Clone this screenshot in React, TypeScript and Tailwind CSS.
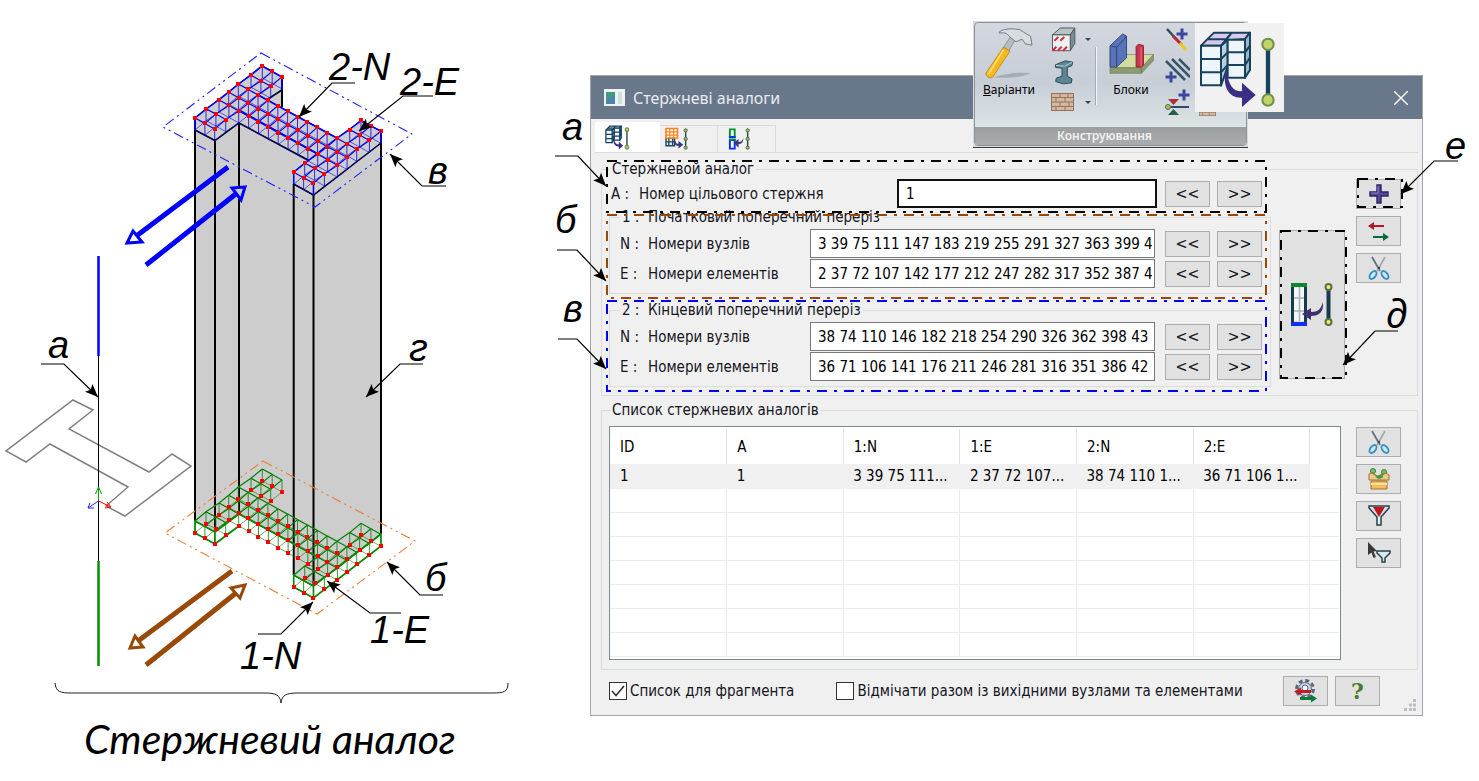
import React from "react";

type Pt = [number, number];

const U: Pt[] = [
  [0, 0],
  [11, -9.3],
  [24, -18],
  [33.7, -25.7],
  [43.3, -34],
  [56, -42.7],
  [67.3, -52],
];

// The section is an I shape: flanges at i = 0..2 and 10..12, web at j = 2..4
const hasNode = (i: number, j: number) =>
  i >= 0 && i <= 12 && j >= 0 && j <= 6 && (i <= 2 || i >= 10 || (j >= 2 && j <= 4));

const node = (i: number, j: number, y: number): Pt => [
  195 + U[j][0] + i * 9.87,
  y + U[j][1] + i * 5.43,
];

function planePath(y: number) {
  let d = "";
  for (let i = 0; i <= 12; i++) {
    for (let j = 0; j <= 6; j++) {
      if (!hasNode(i, j)) continue;
      const a = node(i, j, y);
      const next: Pt[] = [];
      if (hasNode(i + 1, j)) next.push(node(i + 1, j, y));
      if (hasNode(i, j + 1)) next.push(node(i, j + 1, y));
      next.forEach((b) => {
        d += `M${a[0].toFixed(1)} ${a[1].toFixed(1)}L${b[0].toFixed(1)} ${b[1].toFixed(1)}`;
      });
    }
  }
  return d;
}

function nodes(y: number) {
  const list: Pt[] = [];
  for (let i = 0; i <= 12; i++) {
    for (let j = 0; j <= 6; j++) {
      if (hasNode(i, j)) list.push(node(i, j, y));
    }
  }
  return list;
}

function Mesh({ top, color }: { top: number; color: string }) {
  const posts = nodes(top)
    .map(([x, y]) => `M${x.toFixed(1)} ${y.toFixed(1)}v12`)
    .join("");
  return (
    <g fill="none" stroke={color}>
      <path d={planePath(top)} strokeWidth="1.2" />
      <path d={planePath(top + 12)} strokeWidth="0.6" />
      <path d={posts} strokeWidth="0.8" />
    </g>
  );
}

function Dots({ y: plane }: { y: number }) {
  return (
    <g fill="#ff0000">
      {nodes(plane).map(([x, y], n) => (
        <rect key={n} x={Math.round(x) - 2} y={Math.round(y) - 2} width="4" height="4" />
      ))}
    </g>
  );
}

function Callout({ points, label, x, y }: { points: string; label: string; x: number; y: number }) {
  return (
    <g>
      <polyline points={points} fill="none" stroke="#000" strokeWidth="1.2" markerEnd="url(#tip)" />
      <text x={x} y={y} fontSize="38" fontStyle="italic">
        {label}
      </text>
    </g>
  );
}

function ColumnFigure() {
  return (
    <svg
      width="590"
      height="708"
      viewBox="0 0 590 708"
      className="block overflow-visible font-['Liberation_Sans',Arial,sans-serif]"
    >
      <defs>
        <marker id="tip" viewBox="0 0 12 10" refX="12" refY="5" markerWidth="13" markerHeight="11" markerUnits="userSpaceOnUse" orient="auto">
          <path d="M0 0L12 5L0 10L2.500 5z" fill="#000" />
        </marker>
      </defs>

      {/* Column body */}
      <path
        d="M195 118L262 66L282 77V108L337 138L361 121L381 132V534L313.5 586L293.7 575V544L239 514L215 532L195 521z"
        fill="#cdcdcd"
      />
      <g fill="none" stroke="#000" strokeWidth="2">
        <path d="M195 119V521M215 139V532M239 123V514M293.7 184V575M313.5 195V586M381 132V534M282 78V107" />
        <path d="M195 130L215 140.5L239 123L308 160M293.7 184L313.5 195L381 143M268 99L282 90" strokeWidth="1.5" />
      </g>

      <Mesh top={118} color="#0000f0" />
      <path
        d="M195 130V118L262 66L282 77V90M293.7 184V172L337 138M337 138L361 121L381 131V143M258 95L337 138M239 110L318 154M313.5 195V183"
        fill="none"
        stroke="#0000f0"
        strokeWidth="1.5"
      />
      <Dots y={118} />
      <Mesh top={521} color="#008000" />
      <path
        d="M195 533V521L215 532V544zM195 533L215 544L239 526M215 532L239 514L318 557M293.7 575V587L313.5 598L381 546V534L313.5 586zM313.5 586V598"
        fill="none"
        stroke="#008c00"
        strokeWidth="1.6"
      />
      <Dots y={533} />

      {/* Section planes */}
      <g fill="none" strokeWidth="1.1" strokeDasharray="10 4 2 4 2 4">
        <path d="M261 53L412 134L315 207L163 127z" stroke="#2020ff" />
        <path d="M263 461L415 541L317 614L165 533z" stroke="#ed7d31" />
      </g>

      {/* Direction arrows */}
      <g stroke="#0000ff" strokeWidth="5" fill="none">
        <path d="M228 167L135 237M146 265L237 193" />
        <g strokeWidth="3">
          <path d="M127 243L133 231L142 242z" fill="#fff" />
          <path d="M245 187L232 188L241 200z" fill="#cdcdcd" />
        </g>
      </g>
      <g stroke="#984807" strokeWidth="5" fill="none">
        <path d="M232 571L138 641M146 665L236 593" />
        <g strokeWidth="3" fill="#fff">
          <path d="M130 648L135 636L143 647z" />
          <path d="M245 585L231 588L240 598z" />
        </g>
      </g>

      {/* Bar and its cross-section */}
      <path
        d="M73 400L93 410L69 429L149 472L172 454L191 466L125 516L106 506L128 487L50 444L26 462L6 451z"
        fill="none"
        stroke="#808080"
        strokeWidth="1.5"
      />
      <path d="M98.5 356V561" stroke="#000" />
      <path d="M98.5 256V356" stroke="#0000ff" strokeWidth="2.5" />
      <path d="M98.5 561V666" stroke="#009000" strokeWidth="2.5" />
      <g fill="none">
        <path d="M98.5 501V488M95.500 494L98.500 487L101.500 494" stroke="#00a000" />
        <path d="M98.500 501L111 507M107 502L111 507L105 508" stroke="#ff0000" />
        <path d="M98.500 501L88 508M90 503L88 508L94 508" stroke="#2020ff" />
      </g>

      <Callout points="41,364 64,364 98,397" label="а" x={48} y={358} />
      <Callout points="355,83 332,83 299,117" label="2-N" x={329} y={80} />
      <Callout points="433,96 403,96 359,131" label="2-E" x={400} y={95} />
      <Callout points="446,186 422,186 390,154" label="в" x={428} y={184} />
      <Callout points="423,364 400,364 366,397" label="г" x={409} y={361} />
      <Callout points="443,595 420,595 387,562" label="б" x={425} y={591} />
      <Callout points="401,613 370,613 327,581" label="1-E" x={370} y={643} />
      <Callout points="258,634 281,634 313,602" label="1-N" x={240} y={669} />

      <path d="M55 683C56 692 60 693 72 693H265C276 693 280 695 281 703C282 695 286 693 298 693H492C504 693 508 692 508 683" fill="none" stroke="#222" />
    </svg>
  );
}

function Annotations() {
  return (
    <svg
      width="1479"
      height="781"
      viewBox="0 0 1479 781"
      className="pointer-events-none absolute left-0 top-0 font-['Liberation_Sans',Arial,sans-serif]"
    >
      <g fill="none" strokeWidth="2" strokeDasharray="10 7 3 7">
        <rect x="607" y="161" width="659" height="51" stroke="#000" />
        <rect x="607" y="215" width="659" height="83" stroke="#984807" />
        <rect x="607" y="301" width="659" height="90" stroke="#0000ff" />
        <rect x="1281" y="231" width="65" height="147" stroke="#000" />
        <rect x="1358" y="179" width="44" height="28" stroke="#000" />
      </g>
      <Callout points="555,156 578,156 606,186" label="а" x={562} y={140} />
      <Callout points="557,250 577,250 606,281" label="б" x={555} y={233} />
      <Callout points="558,339 577,339 606,369" label="в" x={563} y={322} />
      <g className="font-['Noto_Sans','Open_Sans',sans-serif]">
        <Callout points="1398,331 1375,331 1343,365" label="д" x={1386} y={328} />
      </g>
      <Callout points="1458,161 1434,161 1401,194" label="е" x={1445} y={159} />
    </svg>
  );
}

/* Icons */

function BarAnalogIcon({ className, line = 6 }: { className: string; line?: number }) {
  return (
    <svg viewBox="705 24 267 267" className={className}>
      <g stroke="#16425c" strokeWidth={line} strokeLinejoin="round">
        <path d="M783 92L803 72V155L783 212z" fill="#b8cfe0" />
        <path d="M723 92L762 53H870L855 72L803 76L783 92z" fill="#d9c9f0" />
        <path d="M855 72L870 53V165L855 188z" fill="#9bb6c8" />
        <path d="M803 74H855V188H803z" fill="#eef6fa" />
        <path d="M723 92H783V211H723z" fill="#eef6fa" />
        <path d="M723 132H783L803 112H855L870 92M723 172H783L803 150H855L870 128M742 73H800L815 53M783 92L815 53" fill="none" />
      </g>
      <path d="M796 168C788 215 806 250 846 248V276L887 240L846 203V229C820 230 806 210 800 170z" fill="#3a2f86" />
      <path d="M924 88V255" stroke="#16425c" strokeWidth="13" />
      <g fill="#c3d56a" stroke="#6f8f4a" strokeWidth={line}>
        <circle cx="924" cy="88" r="17" />
        <circle cx="924" cy="255" r="17" />
      </g>
    </svg>
  );
}

function Rod() {
  return (
    <g>
      <path d="M21.500 3V21" stroke="#1b4a5c" strokeWidth="1.5" />
      <g fill="#a9b86a" stroke="#4f6a3a">
        <circle cx="21.500" cy="3" r="1.7" />
        <circle cx="21.500" cy="12" r="1.7" />
        <circle cx="21.500" cy="21" r="1.7" />
      </g>
    </g>
  );
}

function TableTabIcon() {
  return (
    <svg viewBox="0 0 25 24" className="h-6 w-6">
      <path d="M1 11H10V19H1z" fill="#dce8ee" stroke="#1b4a5c" strokeWidth="1.4" />
      <path d="M1 15H11M4 11V19M8 11V19" stroke="#1b4a5c" strokeWidth="1.4" />
      <path d="M1 1H13V11H1z" fill="#fff" stroke="#ff7f1a" strokeWidth="1.6" />
      <path d="M1 4.500H13M1 8H13M5 1V11M9 1V11" stroke="#ff7f1a" strokeWidth="1.2" />
      <path d="M10 13C11 16 12 17 14 17V14L19 18L14 22V19C11 19 9 17 10 13z" fill="#3f3578" />
      <Rod />
    </svg>
  );
}

function SegmentTabIcon() {
  return (
    <svg viewBox="0 0 25 24" className="h-6 w-6">
      <path d="M3 2H8V10H3z" fill="#fff" stroke="#009030" strokeWidth="2" />
      <path d="M3 13H8V22H3z" fill="#fff" stroke="#0030ff" strokeWidth="2" />
      <path d="M2 10H9" stroke="#0030ff" strokeWidth="2" />
      <path d="M2 12.500H9" stroke="#009030" strokeWidth="2" />
      <path d="M17 11C17 16 15 17 12 17.500V21L7 16L12 12V15C15 15 16 14 17 11z" fill="#3f3578" />
      <Rod />
    </svg>
  );
}

function TransferIcon() {
  return (
    <svg viewBox="0 0 42 44" className="h-11 w-[42px]">
      <path d="M3 4H15V38H3z" fill="#f2f7fa" />
      <path d="M8.500 4V38M3 15H15M3 28H15" stroke="#a9b0b8" strokeWidth="1.5" />
      <path d="M1.500 4V39M14.500 4V39" stroke="#173a4c" strokeWidth="3" />
      <path d="M0 0H16V4H0z" fill="#0a8a2a" />
      <path d="M0 39H16V43H0z" fill="#1030f0" />
      <path d="M32 19C33 29 28 33 20 33V37L11 31L20 25V29C27 29 30 26 32 19z" fill="#3f2f70" />
      <path d="M37.500 5V39" stroke="#173a4c" strokeWidth="4" />
      <g fill="#e6ef70" stroke="#5f7040" strokeWidth="2">
        <circle cx="37.500" cy="4" r="3" />
        <circle cx="37.500" cy="39" r="3" />
      </g>
    </svg>
  );
}

function PlusIcon() {
  return (
    <svg viewBox="0 0 20 20" className="h-5 w-5">
      <path d="M8 1H12V8H19V12H12V19H8V12H1V8H8z" fill="#54489a" stroke="#2b2360" strokeWidth="1.4" />
      <path d="M9 2V9H2" fill="none" stroke="#8b83c8" />
    </svg>
  );
}

function SwapIcon() {
  return (
    <svg viewBox="0 0 22 20" className="h-5 w-[22px]">
      <path d="M16 5H6" stroke="#b01822" strokeWidth="2" />
      <path d="M0 5L6 1V9z" fill="#b01822" />
      <path d="M5 16H15" stroke="#0a6a3a" strokeWidth="2" />
      <path d="M21 16L15 12V20z" fill="#0a6a3a" />
    </svg>
  );
}

function ScissorsIcon() {
  return (
    <svg viewBox="0 0 22 24" className="h-6 w-[22px]">
      <path d="M4 1L12 15" stroke="#66707a" strokeWidth="1.8" />
      <path d="M17 1L9 15" stroke="#a2a9b0" strokeWidth="1.8" />
      <circle cx="11" cy="12" r="1.200" fill="#444" />
      <g fill="#cdeaf7" stroke="#3b8fc0" strokeWidth="1.9">
        <ellipse cx="5" cy="19" rx="2.700" ry="4.500" transform="rotate(38 5 19)" />
        <ellipse cx="17" cy="19" rx="2.700" ry="4.500" transform="rotate(-38 17 19)" />
      </g>
    </svg>
  );
}

function BoxIcon() {
  return (
    <svg viewBox="0 0 22 24" className="h-6 w-[22px]">
      <g fill="#7cc06a" stroke="#2f7a34">
        <circle cx="5" cy="4" r="2.500" />
        <circle cx="16" cy="5" r="2.500" />
        <path d="M4 6L9 10L17 7" fill="none" strokeWidth="2" />
      </g>
      <path d="M1 7L4 6L10 10L18 6L21 8V13H1z" fill="#eec98c" stroke="#a5702c" />
      <path d="M3 14H19V22H3z" fill="#f4bc5c" stroke="#a5702c" />
      <path d="M3 17H19" stroke="#fbe0a6" strokeWidth="2" />
      <path d="M8 9L11 11L15 9" fill="none" stroke="#3f9a44" strokeWidth="2" />
    </svg>
  );
}

function FunnelIcon() {
  return (
    <svg viewBox="0 0 22 22" className="h-[22px] w-[22px]">
      <path d="M1 1H21V3L13 12V20H9V12L1 3z" fill="#d5e4ea" stroke="#27404c" strokeWidth="1.5" />
      <path d="M5 2H17L11 12z" fill="#c4141e" />
      <path d="M11 12V19" stroke="#fff" />
    </svg>
  );
}

function PickFilterIcon() {
  return (
    <svg viewBox="0 0 24 22" className="h-[22px] w-6">
      <path d="M1 0L10 9L6.500 9.500L9 15L6.500 16L4.500 10.500L1 13z" fill="#3a3a3a" />
      <path d="M10 9H23V11L18 16V20H15V16L10 11z" fill="#d5e8ee" stroke="#27404c" strokeWidth="1.5" />
    </svg>
  );
}

function GearIcon() {
  return (
    <svg viewBox="0 0 24 24" className="h-6 w-6">
      <circle cx="11" cy="10" r="8.500" fill="none" stroke="#596880" strokeWidth="3" strokeDasharray="4 2.670" />
      <circle cx="11" cy="10" r="6.500" fill="#cdd5e2" stroke="#596880" />
      <circle cx="11" cy="9" r="3" fill="#f4f6fa" stroke="#596880" />
      <path d="M0 12.500L7 8.500V11H17V14H7V16.500z" fill="#c21c24" />
      <path d="M23 19.500L17 15.500V18H6V21H17V23.500z" fill="#0c7a38" />
    </svg>
  );
}

function HammerIcon() {
  return (
    <svg viewBox="85 38 144 158" className="h-[53px] w-12">
      <path d="M112 188C150 176 190 172 222 176C190 190 140 192 112 188z" fill="#8f959c" opacity="0.6" />
      <path d="M140 100L163 64L176 74L156 110z" fill="#b5bcc2" stroke="#6e767e" strokeWidth="2" />
      <path d="M128 52C145 40 175 42 190 46L222 66L226 92L206 88L196 74L178 82L158 66C150 54 140 54 128 56z" fill="#d8dde1" stroke="#737b83" strokeWidth="3" />
      <path d="M140 98L160 110L108 188C100 194 86 186 88 176z" fill="#f6b81a" stroke="#a5750a" strokeWidth="2" />
      <path d="M140 106L96 178" stroke="#ffe07a" strokeWidth="5" />
    </svg>
  );
}

function BlocksIcon() {
  return (
    <svg viewBox="447 53 136 124" className="h-[41px] w-[45px]">
      <path d="M450 158L498 118H582L545 158z" fill="#d4dca4" stroke="#7d8860" strokeWidth="2" />
      <path d="M450 158H545V175H450zM545 158L582 118V136L545 175z" fill="#8c9c70" stroke="#6c7a54" strokeWidth="2" />
      <path d="M450 92L488 56L500 62V128L470 156H450z" fill="#5873b8" stroke="#33487f" strokeWidth="3" />
      <path d="M470 96V154M452 92L470 96L500 64" stroke="#2c4078" strokeWidth="3" fill="none" />
      <path d="M529 94L536 87L551 91V150L545 156H529z" fill="#c93450" stroke="#8c1c34" strokeWidth="3" />
      <path d="M544 96V154" stroke="#ee7b90" strokeWidth="3" />
    </svg>
  );
}

function SolidIcon() {
  return (
    <svg viewBox="272 38 75 76" className="h-[25px] w-[25px]">
      <path d="M276 62L300 41H344L330 62z" fill="#b6c4c6" stroke="#4c5a5c" strokeWidth="3" />
      <path d="M330 62L344 41V88L330 110z" fill="#7b8c8e" stroke="#4c5a5c" strokeWidth="3" />
      <path d="M276 62H330V110H276z" fill="#eef2f2" stroke="#4c5a5c" strokeWidth="3" />
      <path d="M282 80L294 68M300 80L312 68M276 110L288 98M292 110L304 98M308 110L320 98" stroke="#d8243c" strokeWidth="6" />
    </svg>
  );
}

function BeamIcon() {
  return (
    <svg viewBox="278 136 60 74" className="h-[25px] w-5">
      <path d="M282 150L312 138L334 142L332 152L318 158V184L332 192L330 204L306 207L283 200L285 190L302 184V160L283 158z" fill="#5d8594" stroke="#2c4c5a" strokeWidth="3" />
      <path d="M284 152L310 154L332 143" stroke="#b4d0da" strokeWidth="3" fill="none" />
    </svg>
  );
}

function BrickIcon({ className = "h-[18px] w-[23px]" }: { className?: string }) {
  return (
    <svg viewBox="0 0 23 18" className={className} preserveAspectRatio="xMinYMin slice">
      <path d="M0 0H23V18H0z" fill="#d3b89f" />
      <path
        d="M0 4.500H23M0 9H23M0 13.500H23M9 0V4M17 0V4M5 5V9M14 5V9M9 9V13M18 9V13M5 14V18M14 14V18M0 0.500H23M0 17.500H23M0.500 0V18M22.500 0V18"
        stroke="#94735c"
        strokeWidth="1"
      />
    </svg>
  );
}

function SmallPlus({ x, y }: { x: number; y: number }) {
  return <path d={`M${x} ${y - 5.5}v11M${x - 5.5} ${y}h11`} stroke="#3a46a0" strokeWidth="3" />;
}

function AddBarIcon() {
  return (
    <svg viewBox="0 0 25 24" className="h-6 w-[25px]">
      <path d="M2 1L12 12" stroke="#2d4c62" strokeWidth="2.500" />
      <path d="M8 8L17 17" stroke="#b8283a" strokeWidth="3" />
      <path d="M15 15L21 22" stroke="#f2c81c" strokeWidth="3" />
      <SmallPlus x={17} y={6} />
    </svg>
  );
}

function AddHatchIcon() {
  return (
    <svg viewBox="0 0 25 25" className="h-[25px] w-[25px]">
      <path d="M1 3L20 22M7 1L25 19M14 1L25 12" stroke="#35566a" strokeWidth="2.500" />
      <SmallPlus x={6} y={19} />
    </svg>
  );
}

function AddSupportIcon() {
  return (
    <svg viewBox="0 0 25 27" className="h-[27px] w-[25px]">
      <path d="M3 18H24" stroke="#2d4c62" strokeWidth="2" />
      <circle cx="3" cy="18" r="2.500" fill="#a7ba72" stroke="#55703c" />
      <path d="M3 10H14L8.500 16z" fill="#a8323c" />
      <path d="M3 26H14L8.500 20z" fill="#20604c" />
      <SmallPlus x={19} y={6} />
    </svg>
  );
}

/* Ribbon strip */

function Caret() {
  return <span className="border-x-[3px] border-t-[3px] border-x-transparent border-t-[#444]" />;
}

function Ribbon() {
  return (
    <div className="absolute -top-[54px] left-[383px] h-[127px] w-[275px] border-b border-[#3c3c3c] bg-[#d8dcdf] p-px font-['Noto_Sans','Open_Sans',sans-serif] text-[12px]">
      <div className="flex h-[124px] flex-col overflow-hidden rounded border border-[#8d9399] bg-linear-to-b from-[#d3d7de] via-[#c8ced6] to-[#e6eeee]">
        <div className="flex h-[106px] pl-1">
          <button className="flex h-20 w-[60px] flex-col items-center pt-1 leading-4">
            <HammerIcon />
            <span className="mt-[2px]">
              <u>В</u>аріанти
            </span>
          </button>
          <div className="ml-3 flex w-10 flex-col gap-2 pt-1">
            <button className="flex items-center justify-between" aria-label="Об’ємні елементи">
              <SolidIcon />
              <Caret />
            </button>
            <button className="flex pl-[3px]" aria-label="Профіль">
              <BeamIcon />
            </button>
            <button className="flex items-center justify-between" aria-label="Кладка">
              <BrickIcon />
              <Caret />
            </button>
          </div>
          <div className="ml-1 mt-6 h-[58px] w-[2px] border-l border-[#a5abb2] bg-[#f4f6f8]" />
          <button className="ml-[6px] flex h-20 w-14 flex-col items-center pt-[10px] leading-4">
            <BlocksIcon />
            <span className="mt-2">Блоки</span>
          </button>
          <div className="ml-[6px] flex w-[26px] flex-col gap-[6px] pt-[5px]">
            <AddBarIcon />
            <AddHatchIcon />
            <AddSupportIcon />
          </div>
          <div className="ml-2 mt-[86px]">
            <BrickIcon className="h-[7px] w-[17px]" />
          </div>
        </div>
        <div className="h-[18px] bg-linear-to-b from-[#9b9fa0] to-[#a9adad] pr-3 text-center font-semibold leading-[18px] text-[#f1f1f1]">
          Конструювання
        </div>
      </div>
      <div className="absolute left-[222px] top-[2px] h-[89px] w-[89px] bg-[#f1f1f1]">
        <BarAnalogIcon className="h-[89px] w-[89px]" />
      </div>
    </div>
  );
}

/* Dialog controls */

const buttonClass = "flex items-center justify-center border border-[#adadad] bg-[#e1e1e1]";

function IconButton({ label, children }: { label: string; children: React.ReactNode }) {
  return (
    <button aria-label={label} className={`${buttonClass} h-[30px] w-[45px]`}>
      {children}
    </button>
  );
}

function StepButtons() {
  return (
    <div className="flex gap-[7px] text-[16px]">
      <button className={`${buttonClass} h-[26px] w-[45px]`}>&lt;&lt;</button>
      <button className={`${buttonClass} h-[26px] w-[45px]`}>&gt;&gt;</button>
    </div>
  );
}

function FieldRow({ id, mark, label, value }: { id: string; mark: string; label: string; value: string }) {
  return (
    <div className="flex h-[29px] items-center">
      <label htmlFor={id} className="flex flex-1 whitespace-nowrap">
        <span className="w-7">{mark} :</span>
        {label}
      </label>
      <input
        id={id}
        defaultValue={value}
        className="mr-[10px] h-[29px] w-[345px] border border-[#7a7a7a] bg-white pl-[7px] pr-[2px] text-black"
      />
      <StepButtons />
    </div>
  );
}

const sections = [
  {
    key: "start",
    title: "1 :  Початковий поперечний переріз",
    nodes: "3 39 75 111 147 183 219 255 291 327 363 399 435",
    elements: "2 37 72 107 142 177 212 247 282 317 352 387 422",
  },
  {
    key: "end",
    title: "2 :  Кінцевий поперечний переріз",
    nodes: "38 74 110 146 182 218 254 290 326 362 398 43",
    elements: "36 71 106 141 176 211 246 281 316 351 386 42",
  },
];

const columns = ["ID", "A", "1:N", "1:E", "2:N", "2:E"];
const firstRow = ["1", "1", "3 39 75 111...", "2 37 72 107...", "38 74 110 1...", "36 71 106 1..."];

function AnalogTable() {
  return (
    <div className="h-[234px] flex-1 border border-[#828790] bg-white pr-px pt-[2px]">
      <table className="w-full table-fixed border-collapse text-left text-black">
        <thead>
          <tr className="h-[35px]">
            {columns.map((c) => (
              <th key={c} className="w-[16%] border-r border-[#e2e2e2] pl-[10px] font-normal">
                {c}
              </th>
            ))}
            <th />
          </tr>
        </thead>
        <tbody>
          <tr className="h-6 bg-[#f0f0f0]">
            {firstRow.map((c, i) => (
              <td key={i} className="whitespace-nowrap border-b border-[#f0f0f0] pl-[10px] leading-5">
                {c}
              </td>
            ))}
            <td className="border-b border-[#f0f0f0] bg-white" />
          </tr>
          {[1, 2, 3, 4, 5, 6, 7].map((r) => (
            <tr key={r} className="h-6">
              {columns.map((c) => (
                <td key={c} className="border-b border-r border-[#ececec]" />
              ))}
              <td className="border-b border-[#ececec]" />
            </tr>
          ))}
        </tbody>
      </table>
    </div>
  );
}

function Dialog() {
  return (
    <div className="border border-[#a2a6ab] bg-[#f0f0f0] font-['DejaVu_Sans_Condensed','DejaVu_Sans',sans-serif] text-[15px] leading-[18px] text-[#15151f]">
      <header className="flex h-[43px] items-center bg-[#68778a] pl-[13px] pr-[14px] font-['Noto_Sans','Open_Sans',sans-serif] text-[16px] text-[#e8ebef]">
        <svg viewBox="0 0 21 17" className="mr-2 h-[17px] w-[21px]">
          <path d="M0 0H21V17H0z" fill="#eef2f2" />
          <path d="M2 3H11V15H2z" fill="#3f9a80" />
          <path d="M2 10L11 6V15H2z" fill="#4b86a8" />
          <path d="M14 3H18V15H14z" fill="#cfe0d8" />
        </svg>
        <h1 className="flex-1">Стержневі аналоги</h1>
        <button aria-label="Закрити">
          <svg viewBox="0 0 14 14" className="h-[14px] w-[14px]">
            <path d="M0 0L14 14M14 0L0 14" stroke="#fff" strokeWidth="1.4" />
          </svg>
        </button>
      </header>

      <div role="tablist" className="mx-1 mt-1 flex h-[30px] items-end border-b border-[#dadada]">
        <button role="tab" aria-selected="true" aria-label="Стержневий аналог" className="flex h-[30px] w-[65px] items-center bg-white pl-[9px]">
          <BarAnalogIcon className="h-7 w-7" line={12} />
        </button>
        <button role="tab" aria-selected="false" aria-label="Таблиця" className="flex h-[27px] w-[58px] items-center border-r border-t border-[#dadada] pl-[5px]">
          <TableTabIcon />
        </button>
        <button role="tab" aria-selected="false" aria-label="Сегменти" className="flex h-[27px] w-[58px] items-center border-r border-t border-[#dadada] pl-[9px]">
          <SegmentTabIcon />
        </button>
      </div>

      <div className="pl-[10px] pr-1">
        <fieldset className="mt-[6px] border border-[#dcdcdc] pb-2 pl-[7px] pr-4">
          <legend className="ml-px h-5 px-[2px] leading-5">Стержневой аналог</legend>
          <div className="flex">
            <div className="min-w-0 flex-1">
              <div className="flex h-[29px] items-center pl-[2px] pr-[9px]">
                <label htmlFor="target" className="flex flex-1 whitespace-nowrap">
                  <span className="w-7">A :</span>
                  Номер цільового стержня
                </label>
                <input
                  id="target"
                  defaultValue="1"
                  className="mr-2 h-[29px] w-[260px] border-2 border-[#111] bg-white px-[7px] text-black"
                />
                <StepButtons />
              </div>
              {sections.map((s) => (
                <fieldset key={s.key} className="mb-[7px] border border-[#dcdcdc] pb-[5px] pl-[10px] pr-2 pt-[3px] last:mb-0">
                  <legend className="h-[18px] whitespace-pre px-[2px]">{s.title}</legend>
                  <div className="flex flex-col gap-px">
                    <FieldRow id={`${s.key}-nodes`} mark="N" label="Номери вузлів" value={s.nodes} />
                    <FieldRow id={`${s.key}-elements`} mark="E" label="Номери елементів" value={s.elements} />
                  </div>
                </fieldset>
              ))}
            </div>
            <button aria-label="Перенести" className={`${buttonClass} ml-2 mt-[51px] h-[149px] w-[66px]`}>
              <TransferIcon />
            </button>
            <div className="ml-[11px] flex flex-col gap-[7px]">
              <IconButton label="Додати">
                <PlusIcon />
              </IconButton>
              <IconButton label="Поміняти">
                <SwapIcon />
              </IconButton>
              <IconButton label="Вирізати">
                <ScissorsIcon />
              </IconButton>
            </div>
          </div>
        </fieldset>

        <fieldset className="mt-1 border border-[#dcdcdc] pb-[9px] pl-[7px] pr-4 pt-[6px]">
          <legend className="ml-px h-5 px-[2px] leading-5">Список стержневих аналогів</legend>
          <div className="flex">
            <AnalogTable />
            <div className="ml-[15px] flex flex-col gap-[7px] pt-px">
              <IconButton label="Видалити зі списку">
                <ScissorsIcon />
              </IconButton>
              <IconButton label="Упакувати">
                <BoxIcon />
              </IconButton>
              <IconButton label="Фільтр">
                <FunnelIcon />
              </IconButton>
              <IconButton label="Вибрати за фільтром">
                <PickFilterIcon />
              </IconButton>
            </div>
          </div>
        </fieldset>

        <footer className="flex items-center pb-[9px] pl-2 pr-[38px] pt-[6px]">
          <CheckOption label="Список для фрагмента" checked />
          <div className="w-[42px]" />
          <CheckOption label="Відмічати разом із вихідними вузлами та елементами" />
          <div className="ml-auto flex gap-[7px]">
            <IconButton label="Налаштування">
              <GearIcon />
            </IconButton>
            <IconButton label="Довідка">
              <span className="font-['DejaVu_Serif',serif] text-[22px] font-bold text-[#4a7a2c]">?</span>
            </IconButton>
          </div>
        </footer>
      </div>
    </div>
  );
}

function CheckOption({ label, checked = false }: { label: string; checked?: boolean }) {
  return (
    <label className="flex items-center gap-[3px] whitespace-nowrap">
      <span className="relative flex h-[18px] w-[18px]">
        <input
          type="checkbox"
          defaultChecked={checked}
          className="peer h-[18px] w-[18px] appearance-none border border-[#333] bg-white"
        />
        <svg viewBox="0 0 18 18" className="pointer-events-none absolute inset-0 hidden peer-checked:block">
          <path d="M3 9L7 13.500L15 4" fill="none" stroke="#333" strokeWidth="1.6" />
        </svg>
      </span>
      {label}
    </label>
  );
}

function Grip() {
  return (
    <svg viewBox="0 0 12 12" className="absolute bottom-[5px] right-[7px] h-3 w-3">
      <path d="M9 0h3v3h-3zM5 4.500h3v3h-3zM9 4.500h3v3h-3zM0 9h3v3h-3zM5 9h3v3h-3zM9 9h3v3h-3z" fill="#bdbdbd" />
    </svg>
  );
}

export default function App() {
  return (
    <main className="relative flex items-start overflow-hidden bg-white">
      <figure className="w-[590px] shrink-0 pb-3">
        <ColumnFigure />
        <figcaption className="pl-[84px] pt-[6px] font-['Lato','Open_Sans',sans-serif] text-[41px] italic leading-[50px]">
          Стержневий аналог
        </figcaption>
      </figure>
      <section className="mr-14 mt-[75px] min-w-0 flex-1">
        <div className="relative">
          <Dialog />
          <Grip />
          <Ribbon />
        </div>
      </section>
      <Annotations />
    </main>
  );
}
